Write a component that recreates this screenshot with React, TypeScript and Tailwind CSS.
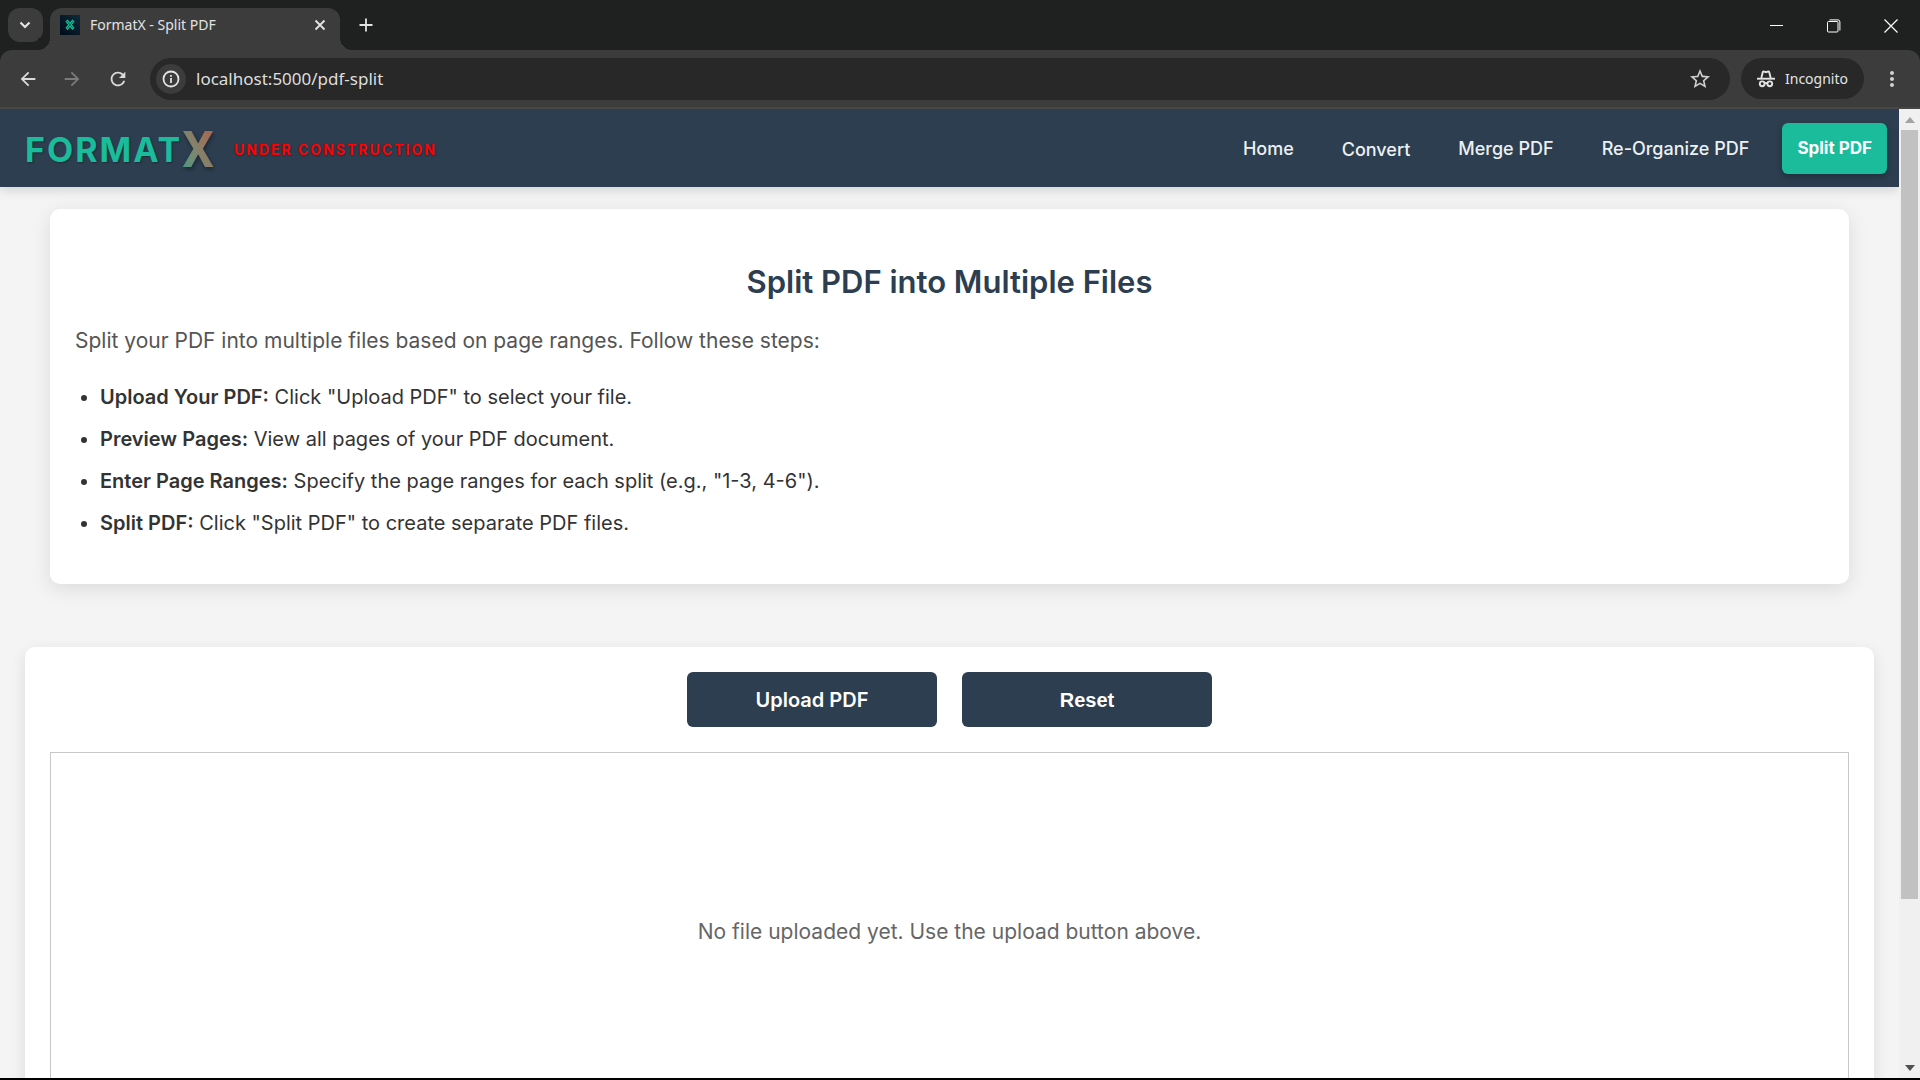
import React from "react";
import {
  MdArrowBack,
  MdArrowForward,
  MdRefresh,
  MdStarBorder,
  MdMoreVert,
} from "react-icons/md";

const navLinks = ["Home", "Convert", "Merge PDF", "Re-Organize PDF"];

const steps = [
  { title: "Upload Your PDF:", text: 'Click "Upload PDF" to select your file.' },
  { title: "Preview Pages:", text: "View all pages of your PDF document." },
  {
    title: "Enter Page Ranges:",
    text: 'Specify the page ranges for each split (e.g., "1-3, 4-6").',
  },
  { title: "Split PDF:", text: 'Click "Split PDF" to create separate PDF files.' },
];

function Favicon() {
  return (
    <svg viewBox="0 0 20 20" className="size-5 shrink-0" fill="none" aria-hidden="true">
      <defs>
        <linearGradient id="fav" x1="1" y1="0" x2="0" y2="1">
          <stop offset="0" stopColor="#0d2a3a" />
          <stop offset="1" stopColor="#020a18" />
        </linearGradient>
      </defs>
      <rect width="20" height="20" fill="url(#fav)" />
      <path d="m6.500 5.500 7 8.500m0-8.500-7 8.500" stroke="#12c99b" strokeWidth="2.800" />
      <path d="m6.800 5.900 6.400 7.700m0-7.700-6.400 7.700" stroke="#04403c" strokeWidth=".8" />
    </svg>
  );
}

function IncognitoIcon() {
  return (
    <svg viewBox="0 0 18 18" className="size-[18px]" fill="none" stroke="#e3e3e3" strokeWidth="1.900" aria-hidden="true">
      <path d="M4.300 8 5.700 2.600Q6 1.200 7.300 1.600L9 2.200l1.700-.6Q12 1.200 12.300 2.600L13.700 8" />
      <path d="M0 8.700h18" />
      <circle cx="5.200" cy="13.800" r="2.400" />
      <circle cx="12.800" cy="13.800" r="2.400" />
      <path d="M7.600 13.400q1.400-.8 2.800 0" />
    </svg>
  );
}

function TabStrip() {
  return (
    <div className="flex h-[50px] items-end bg-[#1f2120]">
      <div className="flex h-[50px] w-[50px] items-center justify-center">
        <button aria-label="Search tabs" className="flex h-[34px] w-[35px] items-center justify-center rounded-xl bg-[#3c3c3c]">
          <svg viewBox="0 0 12 12" className="size-3" fill="none" stroke="#e3e3e3" strokeWidth="2.200" aria-hidden="true">
            <path d="M1.500 3.500 6 8l4.500-4.500" />
          </svg>
        </button>
      </div>
      <div className="relative flex h-[42px] w-[290px] items-center rounded-t-xl bg-[#3c3c3c] px-2.5 pb-2">
        <span className="absolute right-full bottom-0 size-3 bg-[radial-gradient(circle_at_0_0,#1f2120_12px,#3c3c3c_12px)]" />
        <span className="absolute bottom-0 left-full size-3 bg-[radial-gradient(circle_at_100%_0,#1f2120_12px,#3c3c3c_12px)]" />
        <Favicon />
        <span className="ml-2.5 flex-1 text-sm whitespace-nowrap text-[#e3e3e3]">FormatX - Split PDF</span>
        <button aria-label="Close tab" className="flex size-5 items-center justify-center">
          <svg viewBox="0 0 12 12" className="size-3" fill="none" stroke="#e3e3e3" strokeWidth="1.900" aria-hidden="true">
            <path d="m1.500 1.500 9 9m0-9-9 9" />
          </svg>
        </button>
      </div>
      <button aria-label="New tab" className="ml-4 flex h-[50px] w-5 items-center justify-center">
        <svg viewBox="0 0 14 14" className="size-3.5" fill="none" stroke="#e3e3e3" strokeWidth="1.800" aria-hidden="true">
          <path d="M7 .5v13M.5 7h13" />
        </svg>
      </button>
      <div className="ml-auto flex h-[49px] items-center">
        <button aria-label="Minimize" className="flex h-full w-[57px] items-center justify-center">
          <span className="h-px w-[13px] bg-white" />
        </button>
        <button aria-label="Restore" className="flex h-full w-[57px] items-center justify-center">
          <svg viewBox="0 0 14 14" className="size-3.5" fill="none" stroke="#fff" aria-hidden="true">
            <rect x=".5" y="2.500" width="10.500" height="10.500" rx="1" />
            <path d="M2.500.9H11Q12.900.9 12.900 3v8.500" />
          </svg>
        </button>
        <button aria-label="Close window" className="flex h-full w-[58px] items-center justify-center">
          <svg viewBox="0 0 14 14" className="size-3.5" fill="none" stroke="#fff" strokeWidth="1.200" aria-hidden="true">
            <path d="m.5.5 13 13m0-13-13 13" />
          </svg>
        </button>
      </div>
    </div>
  );
}

function Toolbar() {
  return (
    <div className="bg-[#1f2120]">
      <div className="flex h-[59px] items-center rounded-t-xl border-b-2 border-[#464646] bg-[#3c3c3c] px-4">
        <button aria-label="Back" className="flex w-6 justify-center text-[#dadada]">
          <MdArrowBack className="size-[22px]" />
        </button>
        <button aria-label="Forward" className="ml-5 flex w-6 justify-center text-[#7b7b7b]">
          <MdArrowForward className="size-[22px]" />
        </button>
        <button aria-label="Reload" className="ml-[22px] flex w-6 justify-center text-[#dadada]">
          <MdRefresh className="size-[22px]" />
        </button>
        <div className="ml-5 flex h-[42px] flex-1 items-center rounded-full bg-[#282828] pr-[18px] pl-1.5">
          <button aria-label="Site information" className="flex size-[30px] items-center justify-center rounded-full bg-[#3c3c3c]">
            <svg viewBox="0 0 18 18" className="size-[18px]" fill="none" stroke="#e3e3e3" strokeWidth="1.800" aria-hidden="true">
              <circle cx="9" cy="9" r="7.500" />
              <path d="M9 8v5M9 5v1.800" />
            </svg>
          </button>
          <input
            aria-label="Address"
            className="ml-2.5 min-w-0 flex-1 bg-transparent text-[17px] text-[#dedede] outline-none"
            defaultValue="localhost:5000/pdf-split"
          />
          <button aria-label="Bookmark this tab" className="text-[#d0d0d0]">
            <MdStarBorder className="size-6" />
          </button>
        </div>
        <button className="ml-[11px] flex h-[41px] items-center gap-2.5 rounded-full bg-[#282828] px-4 text-sm text-[#e3e3e3]">
          <IncognitoIcon />
          Incognito
        </button>
        <button aria-label="Menu" className="ml-4 text-[#d0d0d0]">
          <MdMoreVert className="size-6" />
        </button>
      </div>
    </div>
  );
}

function SiteHeader() {
  return (
    <header className="relative flex h-[78px] shrink-0 items-center bg-[#2c3e50] pr-3 pl-[25px] shadow-[0_4px_10px_rgba(0,0,0,0.12)]">
      <a href="#" className="flex items-center font-bold text-[#1abc9c]">
        <span className="pt-1 text-[34px] leading-none tracking-[2px] [text-shadow:1px_1px_2px_rgba(0,0,0,0.3)]">FORMAT</span>
        <span className="bg-linear-to-tr from-[#1abc9c] to-[#e0603f] bg-clip-text pt-1 font-['Roboto'] text-[50px] leading-none text-transparent opacity-75 drop-shadow-[1px_2px_2px_rgba(0,0,0,0.5)]">X</span>
      </a>
      <span className="ml-5 pt-0.5 text-[14px] font-bold tracking-[2px] text-[#ff0000] [text-shadow:1px_1px_2px_rgba(0,0,0,0.3)]">
        UNDER CONSTRUCTION
      </span>
      <nav className="ml-auto flex items-center gap-[18px] text-lg font-medium text-[#ecf0f1]">
        {navLinks.map((label) => (
          <a key={label} href="#" className={label === "Convert" ? "px-[15px] pt-4 pb-3 whitespace-nowrap" : "px-[15px] pt-3 pb-2.5 whitespace-nowrap"}>
            {label}
          </a>
        ))}
        <a href="#" className="flex h-[51px] items-center rounded-md bg-[#1abc9c] px-[15px] text-[17px] font-bold whitespace-nowrap text-white shadow-[0_3px_6px_rgba(0,0,0,0.25)]">
          Split PDF
        </a>
      </nav>
    </header>
  );
}

function Scrollbar() {
  return (
    <div className="flex w-[21px] shrink-0 flex-col items-center bg-[#f0f0f0]">
      <button aria-label="Scroll up" className="flex h-[21px] w-full shrink-0 items-center justify-center">
        <svg viewBox="0 0 10 6" className="h-1.5 w-2.5" fill="#a3a3a3" aria-hidden="true"><path d="M0 6 5 0l5 6z" /></svg>
      </button>
      <div className="flex w-full flex-1 flex-col px-0.5">
        <div className="h-[83%] bg-[#c1c1c1]" />
      </div>
      <button aria-label="Scroll down" className="flex h-[21px] w-full shrink-0 items-center justify-center">
        <svg viewBox="0 0 10 6" className="h-1.5 w-2.5" fill="#505050" aria-hidden="true"><path d="M0 0h10L5 6z" /></svg>
      </button>
    </div>
  );
}

export default function App() {
  return (
    <div className="flex h-screen flex-col overflow-hidden border-b-2 border-black bg-[#f4f4f4] font-['Noto_Sans',sans-serif]">
      <TabStrip />
      <Toolbar />
      <div className="flex min-h-0 flex-1">
        <div className="flex min-w-0 flex-1 flex-col overflow-hidden font-['Inter',sans-serif] text-[#333333]">
          <SiteHeader />
          <main className="flex flex-col px-[25px]">
            <section className="mx-[25px] mt-[22px] rounded-[10px] bg-white px-[25px] pt-[51px] pb-[35px] shadow-[0_5px_20px_rgba(0,0,0,0.1)]">
              <h1 className="text-center text-[31px] leading-[44px] font-semibold text-[#2c3e50]">
                Split PDF into Multiple Files
              </h1>
              <p className="mt-[21px] text-[21px] leading-8 text-[#555555]">
                Split your PDF into multiple files based on page ranges. Follow these steps:
              </p>
              <ul className="mt-6 list-disc pl-[25px] text-xl leading-8">
                {steps.map((s) => (
                  <li key={s.title} className="mb-2.5">
                    <strong className="font-semibold">{s.title}</strong> {s.text}
                  </li>
                ))}
              </ul>
            </section>
            <section className="mt-[63px] rounded-[10px] bg-white p-[25px] shadow-[0_5px_15px_rgba(0,0,0,0.1)]">
              <div className="flex justify-center gap-[25px] text-xl font-semibold text-white">
                <button className="h-[55px] w-[250px] rounded-md bg-[#2c3e50]">Upload PDF</button>
                <button className="h-[55px] w-[250px] rounded-md bg-[#2c3e50] font-['Liberation_Sans'] font-bold">Reset</button>
              </div>
              <div className="mt-[25px] flex min-h-[360px] items-center justify-center border border-[#c8c8c8] text-[21px] text-[#666666]">
                <p>No file uploaded yet. Use the upload button above.</p>
              </div>
            </section>
          </main>
        </div>
        <Scrollbar />
      </div>
    </div>
  );
}
